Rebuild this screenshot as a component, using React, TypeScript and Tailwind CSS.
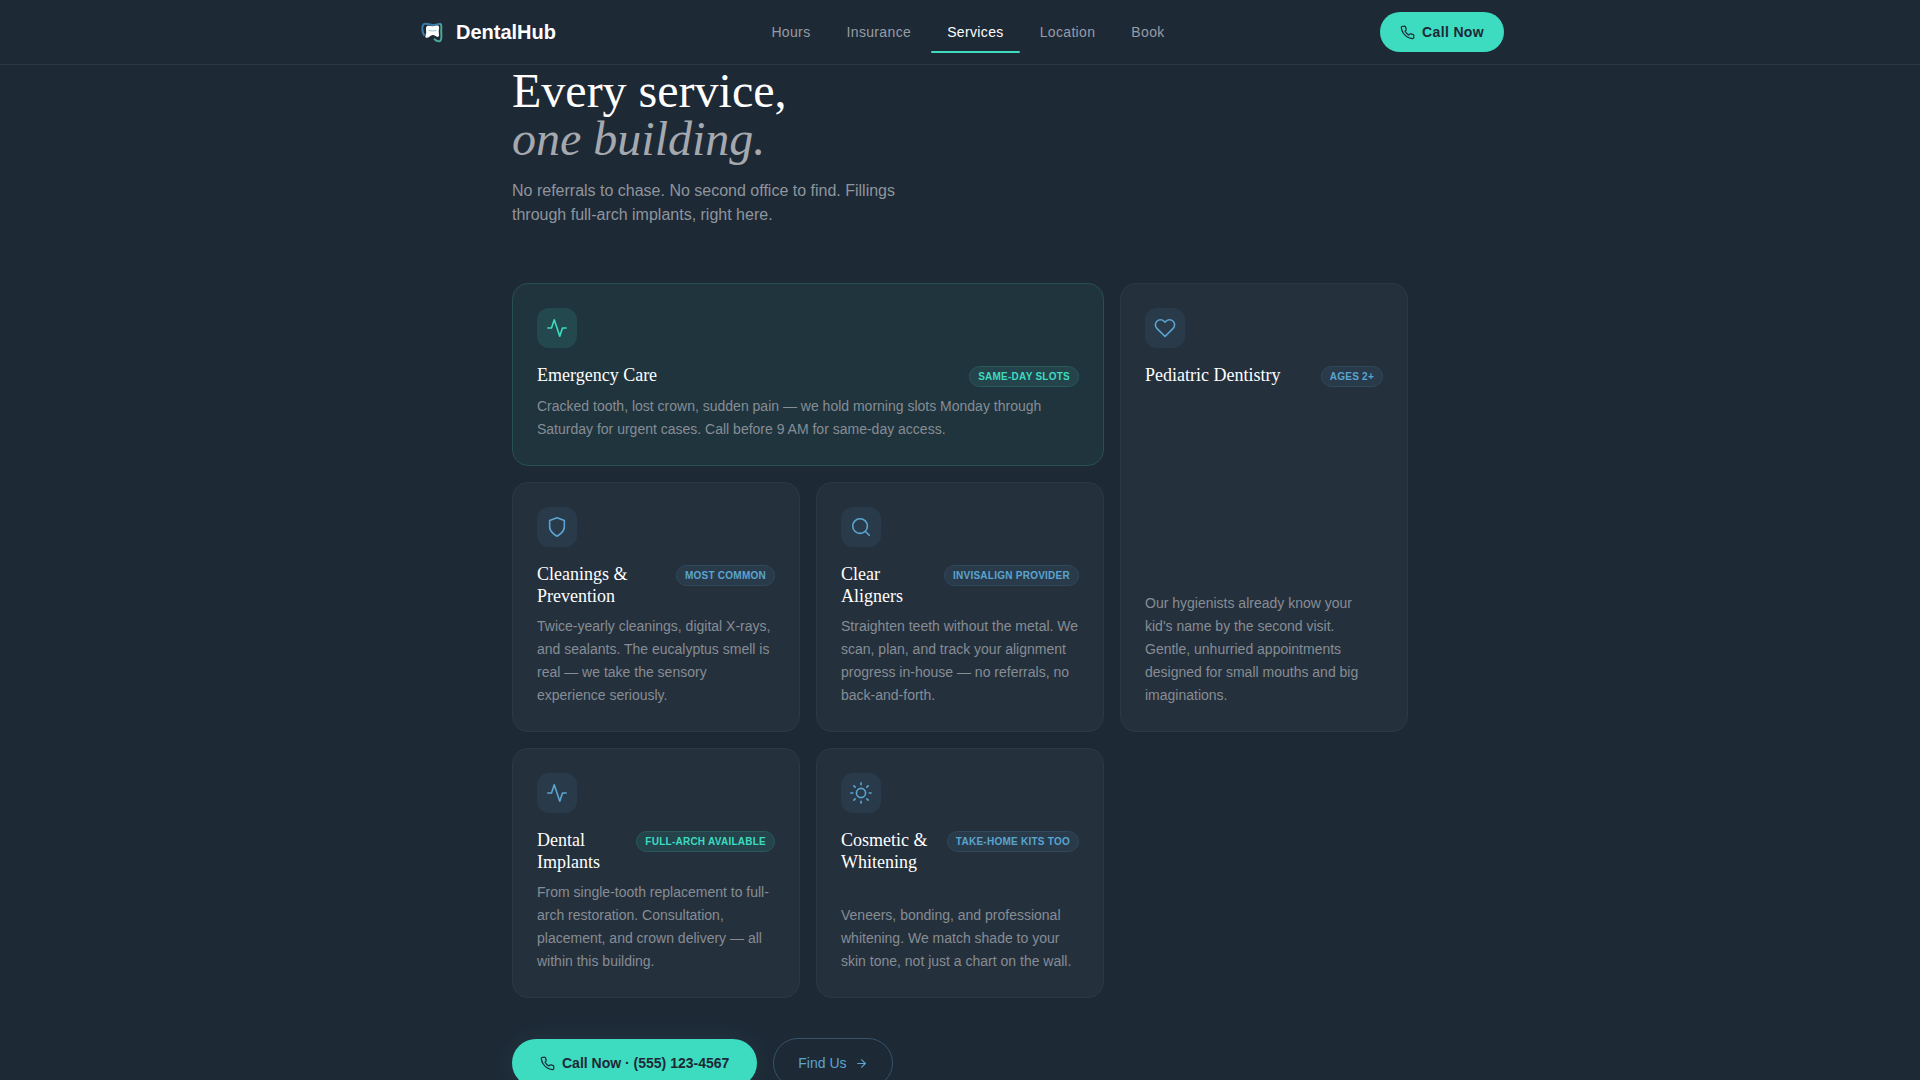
import React from "react";
import clsx from "clsx";
import {
  FiActivity,
  FiArrowRight,
  FiHeart,
  FiPhone,
  FiSearch,
  FiShield,
  FiSun,
} from "react-icons/fi";
import type { IconType } from "react-icons";

type Tone = "mint" | "sky";

interface Service {
  title: string;
  badge: string;
  badgeTone: Tone;
  icon: IconType;
  text: string;
  layout?: string;
  featured?: boolean;
}

const navLinks = ["Hours", "Insurance", "Services", "Location", "Book"];

const services: Service[] = [
  {
    title: "Emergency Care",
    badge: "Same-day slots",
    badgeTone: "mint",
    icon: FiActivity,
    text: "Cracked tooth, lost crown, sudden pain — we hold morning slots Monday through Saturday for urgent cases. Call before 9 AM for same-day access.",
    layout: "md:col-span-2",
    featured: true,
  },
  {
    title: "Pediatric Dentistry",
    badge: "Ages 2+",
    badgeTone: "sky",
    icon: FiHeart,
    text: "Our hygienists already know your kid's name by the second visit. Gentle, unhurried appointments designed for small mouths and big imaginations.",
    layout: "md:row-span-2",
  },
  {
    title: "Cleanings & Prevention",
    badge: "Most common",
    badgeTone: "sky",
    icon: FiShield,
    text: "Twice-yearly cleanings, digital X-rays, and sealants. The eucalyptus smell is real — we take the sensory experience seriously.",
  },
  {
    title: "Clear Aligners",
    badge: "Invisalign provider",
    badgeTone: "sky",
    icon: FiSearch,
    text: "Straighten teeth without the metal. We scan, plan, and track your alignment progress in-house — no referrals, no back-and-forth.",
  },
  {
    title: "Dental Implants",
    badge: "Full-arch available",
    badgeTone: "mint",
    icon: FiActivity,
    text: "From single-tooth replacement to full-arch restoration. Consultation, placement, and crown delivery — all within this building.",
  },
  {
    title: "Cosmetic & Whitening",
    badge: "Take-home kits too",
    badgeTone: "sky",
    icon: FiSun,
    text: "Veneers, bonding, and professional whitening. We match shade to your skin tone, not just a chart on the wall.",
  },
];

const Logo: React.FC = () => (
  <svg viewBox="0 0 32 32" className="w-8 h-8" fill="none" aria-hidden="true">
    <path
      d="M8 19C6 15.500 5.600 10.500 7.500 8.300c2.200-1.600 5-.3 8 .5 3 .6 6-.9 8.800-1"
      stroke="#3a7ca8"
      strokeWidth="2"
      strokeLinecap="round"
    />
    <path
      d="M25 8.500c.8 2 .2 4.500.2 7 .1 3.500 1 8.300-1.200 9.500-2 .8-4-.3-5.500-1.700"
      stroke="#4aa896"
      strokeWidth="2"
      strokeLinecap="round"
    />
    <path
      d="M10.800 10.300c2-1.100 4.200.1 6.200 0 2-.1 4.200-1.300 5.700-.3 1 1.500-.1 3.600 0 5.800.1 2 1 4.300-.5 5-1.800.6-3-1.800-5.400-1.800s-4.200 3.200-6.600 2.800c-1.700-.5-.2-3.400 0-5.400.2-2.200-1-4.700.6-6.100z"
      fill="#fff"
    />
    <path
      d="M13 14.500c2.300.6 4.700.6 7 0"
      stroke="#7cc6cc"
      strokeWidth="1"
      strokeLinecap="round"
    />
  </svg>
);

const ServiceCard: React.FC<{ service: Service }> = ({ service }) => {
  const Icon = service.icon;

  return (
    <article
      className={clsx(
        "flex flex-col rounded-2xl border p-6",
        service.featured
          ? "bg-[#20343e] border-[#285052]"
          : "bg-[#25303d] border-[#2b3946]",
        service.layout
      )}
    >
      <div
        className={clsx(
          "w-10 h-10 mb-4 rounded-xl flex items-center justify-center",
          service.featured
            ? "bg-[#23484d] text-[#3ddbc0]"
            : "bg-[#293b4a] text-[#5ba4cf]"
        )}
      >
        <Icon size={22} strokeWidth={1.75} />
      </div>

      <div className="flex items-start justify-between gap-3 mb-2">
        <h3 className="font-['Liberation_Serif',serif] text-lg leading-[22px] text-white">
          {service.title}
        </h3>
        <span
          className={clsx(
            "mt-0.5 shrink-0 rounded-full border px-2 py-0.5 text-[10px] leading-[15px] font-bold uppercase tracking-wide",
            service.badgeTone === "mint"
              ? "bg-[#24434b] border-[#28595b] text-[#3ddbc0]"
              : "bg-[#293b4a] border-[#2f485a] text-[#5ba4cf]"
          )}
        >
          {service.badge}
        </span>
      </div>

      <p className="mt-auto text-sm leading-[23px] text-[#868d94]">
        {service.text}
      </p>
    </article>
  );
};

const App: React.FC = () => {
  return (
    <div className="min-h-screen bg-[#1e2936] font-['Liberation_Sans',Arial,sans-serif] text-white">
      <header className="sticky top-0 z-10 bg-[#1e2936] border-b border-[#2b3946]">
        <div className="max-w-6xl mx-auto h-16 px-8 flex items-center justify-between">
          <a href="#top" className="flex items-center gap-2">
            <Logo />
            <span className="text-xl font-bold">DentalHub</span>
          </a>

          <nav className="hidden md:flex items-center gap-1">
            {navLinks.map((link) => {
              const active = link === "Services";
              return (
                <a
                  key={link}
                  href={`#${link.toLowerCase()}`}
                  className={clsx(
                    "relative h-10 px-4 flex items-center text-sm tracking-wide",
                    active ? "text-white" : "text-[#969ca4]"
                  )}
                >
                  {link}
                  {active && (
                    <span className="absolute inset-x-0 -bottom-px h-0.5 rounded-full bg-[#3ddbc0]" />
                  )}
                </a>
              );
            })}
          </nav>

          <button
            type="button"
            className="h-10 px-5 flex items-center gap-[7px] rounded-full bg-[#3ddbc0] text-[#1e2936] text-sm font-bold tracking-wide"
          >
            <FiPhone size={15} strokeWidth={2} />
            Call Now
          </button>
        </div>
      </header>

      <main id="services" className="max-w-5xl mx-auto px-16 pt-0.5 pb-16">
        <h2 className="font-['Liberation_Serif',serif] text-5xl leading-[48px]">
          Every service,
          <br />
          <em className="text-[#a5a9af]">one building.</em>
        </h2>
        <p className="mt-4 max-w-[420px] text-base leading-6 text-[#8f959c]">
          No referrals to chase. No second office to find. Fillings through
          full-arch implants, right here.
        </p>

        <div className="mt-14 grid grid-cols-1 md:grid-cols-3 gap-4">
          {services.map((service) => (
            <ServiceCard key={service.title} service={service} />
          ))}
        </div>

        <div className="mt-10 flex flex-wrap items-center gap-4">
          <button
            type="button"
            className="h-12 px-7 flex items-center gap-[7px] rounded-full bg-[#3ddbc0] text-[#1e2936] text-sm font-bold shadow-[0_0_24px_rgba(61,219,192,0.08)]"
          >
            <FiPhone size={15} strokeWidth={2} />
            Call Now · (555) 123-4567
          </button>
          <a
            href="#location"
            className="h-[50px] px-6 flex items-center gap-2 rounded-full border border-[#35536a] text-[#5ba4cf] text-sm"
          >
            Find Us
            <FiArrowRight size={13} strokeWidth={2} />
          </a>
        </div>
      </main>
    </div>
  );
};

export default App;
